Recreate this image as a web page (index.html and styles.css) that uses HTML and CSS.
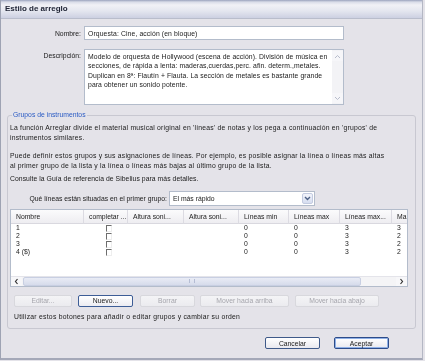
FILE: index.html
```html
<!DOCTYPE html>
<html lang="es">
<head>
<meta charset="utf-8">
<title>Estilo de arreglo</title>
<link rel="stylesheet" href="styles.css">
</head>
<body>
<div class="win">
  <div class="titlebar">Estilo de arreglo</div>
  <div class="content">
    <div class="field">
      <span class="lbl">Nombre:</span>
      <div class="input">Orquesta: Cine, acción (en bloque)</div>
    </div>
    <div class="field field-desc">
      <span class="lbl">Descripción:</span>
      <div class="textarea">
        <div class="ta-text">Modelo de orquesta de Hollywood (escena de acción). División de música en<br>secciones, de rápida a lenta: maderas,cuerdas,perc. afin. determ.,metales.<br>Duplican en 8ª: Flautín + Flauta. La sección de metales es bastante grande<br>para obtener un sonido potente.</div>
        <div class="vscroll">
          <span class="sb-btn"><svg width="7" height="5" viewBox="0 0 7 5"><path d="M1 4 L3.5 1.5 L6 4" fill="none" stroke="#b7bccb" stroke-width="1"/></svg></span>
          <span class="sb-btn"><svg width="7" height="5" viewBox="0 0 7 5"><path d="M1 1 L3.5 3.5 L6 1" fill="none" stroke="#b7bccb" stroke-width="1"/></svg></span>
        </div>
      </div>
    </div>

    <fieldset class="group">
      <legend>Grupos de instrumentos</legend>
      <p class="para">La función Arreglar divide el material musical original en 'líneas' de notas y los pega a continuación en 'grupos' de<br>instrumentos similares.</p>
      <p class="para para2">Puede definir estos grupos y sus asignaciones de líneas. Por ejemplo, es posible asignar la línea o líneas más altas<br>al primer grupo de la lista y la línea o líneas más bajas al último grupo de la lista.</p>
      <p class="para para3">Consulte la Guía de referencia de Sibelius para más detalles.</p>
      <div class="sel-row">
        <span class="sel-lbl">Qué líneas están situadas en el primer grupo:</span>
        <div class="select">
          <span class="sel-val">El más rápido</span>
          <span class="sel-btn"><svg width="7" height="5" viewBox="0 0 7 5"><path d="M1 1 L3.5 3.5 L6 1" fill="none" stroke="#4d6185" stroke-width="1.4"/></svg></span>
        </div>
      </div>

      <div class="list">
        <div class="grid">
          <div class="hd">Nombre</div>
          <div class="hd">completar ...</div>
          <div class="hd">Altura soni...</div>
          <div class="hd">Altura soni...</div>
          <div class="hd">Líneas min</div>
          <div class="hd">Líneas max</div>
          <div class="hd">Líneas max...</div>
          <div class="hd">Ma</div>

          <div class="cell">1</div><div class="cell ck"><span class="chk"></span></div><div class="cell"></div><div class="cell"></div><div class="cell">0</div><div class="cell">0</div><div class="cell">3</div><div class="cell">3</div>
          <div class="cell">2</div><div class="cell ck"><span class="chk"></span></div><div class="cell"></div><div class="cell"></div><div class="cell">0</div><div class="cell">0</div><div class="cell">3</div><div class="cell">2</div>
          <div class="cell">3</div><div class="cell ck"><span class="chk"></span></div><div class="cell"></div><div class="cell"></div><div class="cell">0</div><div class="cell">0</div><div class="cell">3</div><div class="cell">2</div>
          <div class="cell">4 ($)</div><div class="cell ck"><span class="chk"></span></div><div class="cell"></div><div class="cell"></div><div class="cell">0</div><div class="cell">0</div><div class="cell">3</div><div class="cell">2</div>
        </div>
        <div class="hscroll">
          <span class="hs-btn"><svg width="5" height="7" viewBox="0 0 5 7"><path d="M3.5 1 L1.5 3.5 L3.5 6" fill="none" stroke="#333" stroke-width="1.2"/></svg></span>
          <span class="hs-thumb"><span class="grip"></span></span>
          <span class="hs-track"></span>
          <span class="hs-btn"><svg width="5" height="7" viewBox="0 0 5 7"><path d="M1.5 1 L3.5 3.5 L1.5 6" fill="none" stroke="#333" stroke-width="1.2"/></svg></span>
        </div>
      </div>

      <div class="btns">
        <span class="btn dis b-edit">Editar...</span>
        <span class="btn b-new">Nuevo...</span>
        <span class="btn dis b-del">Borrar</span>
        <span class="btn dis b-up">Mover hacia arriba</span>
        <span class="btn dis b-down">Mover hacia abajo</span>
      </div>
      <p class="hint">Utilizar estos botones para añadir o editar grupos y cambiar su orden</p>
    </fieldset>

    <div class="footer">
      <span class="btn fbtn">Cancelar</span>
      <span class="btn fbtn def">Aceptar</span>
    </div>
  </div>
</div>
</body>
</html>
```
FILE: styles.css
```css
* { box-sizing: border-box; }
html, body { margin: 0; padding: 0; }
body {
  width: 425px;
  height: 361px;
  overflow: hidden;
  background: #e4e3e9;
  font-family: "Liberation Sans", Arial, sans-serif;
  font-size: 6.8px;
  color: #1a1a1a;
}
.win {
  width: 423px;
  height: 360px;
  border-left: 1px solid #9ea3b3;
  border-right: 1px solid #b4b7c4;
  border-bottom: 2px solid #a4a8b8;
  background: #e4e3e9;
  will-change: transform;
}
.titlebar {
  height: 19px;
  padding: 4px 0 0 4px;
  font-weight: bold;
  font-size: 8px;
  color: #1d2233;
  background: linear-gradient(#9aa2bd 0, #d9dce8 2px, #f1f1f6 5px, #e4e6ef 11px, #c9cde0 19px);
  border-bottom: 1px solid #b9bdcc;
}
.content { padding: 0 0 0 6px; }
.field { display: flex; align-items: center; margin-top: 7px; }
.field-desc { align-items: flex-start; margin-top: 9px; }
.lbl { width: 77px; text-align: right; padding-right: 3px; }
.field-desc .lbl { padding-top: 3px; }
.input {
  width: 260px;
  height: 14px;
  background: #fff;
  border: 1px solid #b3bccb;
  padding: 2px 3px;
  line-height: 9px;
  letter-spacing: 0.12px;
}
.textarea {
  width: 260px;
  height: 56px;
  background: #fff;
  border: 1px solid #b3bccb;
  display: flex;
}
.ta-text {
  flex: 1;
  padding: 2px 3px;
  line-height: 9.3px;
  white-space: nowrap;
  overflow: hidden;
  letter-spacing: 0.1px;
}
.vscroll {
  width: 11px;
  background: #f3f3f6;
  display: flex;
  flex-direction: column;
  justify-content: space-between;
  padding: 1px 0;
}
.sb-btn {
  height: 10px;
  display: flex;
  align-items: center;
  justify-content: center;
  background: #f6f6f9;
}

.group {
  margin: 6px 0 0 0;
  width: 409px;
  height: 218px;
  border: 1px solid #c8c8d1;
  border-radius: 3px;
  padding: 0 0 0 2px;
}
.group legend {
  color: #2a5bc4;
  padding: 0 1px;
  margin-left: 2px;
  line-height: 8px;
}
.para { margin: 4px 0 0 0; line-height: 9.6px; white-space: nowrap; letter-spacing: 0.22px; }
.para2 { margin-top: 9px; }
.para3 { margin-top: 4px; letter-spacing: 0.06px; }
.sel-row { display: flex; align-items: center; margin-top: 7px; }
.sel-lbl { width: 159px; text-align: right; padding-right: 2px; }
.select {
  width: 146px;
  height: 15px;
  background: #fff;
  border: 1px solid #b3bccb;
  display: flex;
  align-items: center;
  justify-content: space-between;
  padding: 0 1px 0 3px;
}
.sel-btn {
  width: 11px;
  height: 11px;
  border-radius: 2px;
  background: linear-gradient(#f2f4fb, #d6ddf0);
  border: 1px solid #c3cbe0;
  display: flex;
  align-items: center;
  justify-content: center;
}

.list {
  margin-top: 3px;
  width: 398px;
  height: 78px;
  background: #fff;
  border: 1px solid #b3bccb;
  display: flex;
  flex-direction: column;
  justify-content: space-between;
  overflow: hidden;
}
.grid {
  display: grid;
  grid-template-columns: 73px 44px 56px 55px 50px 51px 52px 30px;
  grid-auto-rows: 8px;
  grid-template-rows: 14px;
  row-gap: 0;
  width: 411px;
  color: #1a1a1a;
}
.hd {
  height: 14px;
  line-height: 13px;
  padding-left: 5px;
  background: linear-gradient(#fbfbfc, #eeedf1);
  border-bottom: 1px solid #d9d8df;
  border-right: 1px solid #dcdbe2;
  color: #222;
  white-space: nowrap;
  overflow: hidden;
  margin-bottom: 2px;
}
.cell { padding-left: 5px; line-height: 8px; white-space: nowrap; color: #222; }
.ck { padding-left: 22px; }
.chk {
  display: inline-block;
  width: 6px;
  height: 7px;
  border-top: 1px solid #6d6d6d;
  border-left: 1px solid #6d6d6d;
  border-right: 1px solid #eeeeee;
  border-bottom: 1px solid #eeeeee;
  margin-top: 1px;
}
.hscroll {
  height: 10px;
  display: flex;
  background: #f4f4f6;
  border-top: 1px solid #e4e4ea;
}
.hs-btn {
  width: 11px;
  display: flex;
  align-items: center;
  justify-content: center;
  background: #f7f7f9;
}
.hs-thumb {
  width: 338px;
  margin: 0 1px;
  background: linear-gradient(#e9ecf5, #d6dbeb);
  border: 1px solid #c8cfe2;
  border-radius: 2px;
  display: flex;
  align-items: center;
  justify-content: center;
}
.grip { width: 6px; height: 4px; border-left: 1px solid #b5bdd4; border-right: 1px solid #b5bdd4; }
.hs-track { flex: 1; }

.btns { display: flex; margin-top: 8px; }
.btn {
  display: flex;
  align-items: center;
  justify-content: center;
  height: 12px;
  border: 1px solid #d8d8dd;
  border-radius: 2px;
  background: linear-gradient(#f4f4f6, #ebebef);
  color: #a6a6ad;
}
.b-edit { width: 58px; margin-left: 4px; }
.b-new { width: 55px; margin-left: 6px; color: #1a1a1a; border-color: #3d5d96; background: linear-gradient(#ffffff, #ececf2); }
.b-del { width: 55px; margin-left: 7px; }
.b-up { width: 89px; margin-left: 5px; }
.b-down { width: 84px; margin-left: 6px; }
.hint { margin: 5px 0 0 4px; line-height: 9px; letter-spacing: 0.26px; }

.footer { display: flex; margin: 8px 0 0 258px; }
.fbtn {
  width: 55px;
  height: 12px;
  color: #1a1a1a;
  border-color: #3f5a89;
  background: linear-gradient(#ffffff, #e9e9ef);
}
.def { margin-left: 14px; border: 1px solid #2d4c8a; box-shadow: inset 0 0 0 1px #8fb0e6; }
```
